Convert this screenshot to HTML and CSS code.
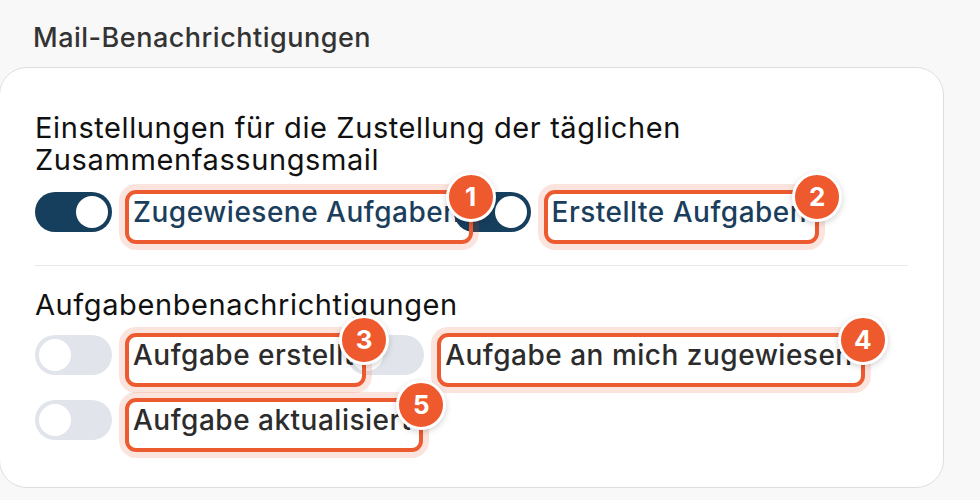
FILE: index.html
```html
<!DOCTYPE html>
<html lang="de">
<head>
    <meta charset="UTF-8">
    <meta name="viewport" content="width=device-width, initial-scale=1.0">
    <title>Mail-Benachrichtigungen</title>
    <link rel="stylesheet" href="styles.css">
</head>
<body>
    <h3 class="section-heading">Mail-Benachrichtigungen</h3>
    <div class="card">
        <p class="group-title">Einstellungen für die Zustellung der täglichen Zusammenfassungsmail</p>
        <div class="options">
            <div class="option">
                <span class="toggle on"></span>
                <span class="label on">Zugewiesene Aufgaben<span class="badge">1</span></span>
            </div>
            <div class="option">
                <span class="toggle on"></span>
                <span class="label on">Erstellte Aufgaben<span class="badge">2</span></span>
            </div>
        </div>

        <hr class="divider">

        <p class="group-title">Aufgabenbenachrichtigungen</p>
        <div class="options">
            <div class="option">
                <span class="toggle"></span>
                <span class="label">Aufgabe erstellt<span class="badge">3</span></span>
            </div>
            <div class="option">
                <span class="toggle"></span>
                <span class="label">Aufgabe an mich zugewiesen<span class="badge">4</span></span>
            </div>
            <div class="option">
                <span class="toggle"></span>
                <span class="label">Aufgabe aktualisiert<span class="badge">5</span></span>
            </div>
        </div>
    </div>
</body>
</html>
```

FILE: styles.css
```css
body {
    font-family: Inter, "Noto Sans", sans-serif;
    margin: 0;
    background-color: #f8f8f8;
    overflow: hidden;
}
.section-heading {
    margin: 22px 0 13px 33px;
    font-size: 27px;
    line-height: 32px;
    letter-spacing: 0.5px;
    font-weight: 500;
    color: #333;
}
.card {
    width: 873px;
    margin-left: -1px;
    padding: 44px 35px 47px 35px;
    background-color: white;
    border: 1px solid #dedede;
    border-radius: 28px;
}
.group-title {
    margin: 0;
    font-size: 29px;
    line-height: 32px;
    letter-spacing: 0.6px;
    color: #111;
}
.options {
    display: flex;
    flex-wrap: wrap;
    row-gap: 25px;
    margin-top: 16px;
}
.option {
    display: flex;
    align-items: center;
    gap: 21px;
    margin-right: -7px;
}
.toggle {
    position: relative;
    flex: none;
    width: 77px;
    height: 40px;
    border-radius: 20px;
    background-color: #e1e5eb;
}
.toggle::after {
    content: "";
    position: absolute;
    top: 4px;
    left: 4px;
    width: 32px;
    height: 32px;
    border-radius: 50%;
    background-color: white;
}
.toggle.on {
    background-color: #163f5e;
}
.toggle.on::after {
    left: 41px;
}
.label {
    position: relative;
    z-index: 1;
    font-size: 28px;
    line-height: 32px;
    letter-spacing: 0.5px;
    font-weight: 500;
    color: #2c2c2c;
}
.label.on {
    color: #1a3e5c;
}
/* callout frame around each label */
.label::before {
    content: "";
    position: absolute;
    top: -6px;
    bottom: -16px;
    left: -8px;
    right: -12px;
    border: 4px solid #ec5a30;
    border-radius: 11px;
    box-shadow: 0 0 0 6px rgba(236, 90, 48, 0.16);
}
.badge {
    position: absolute;
    top: -24px;
    right: -35px;
    z-index: 2;
    width: 44px;
    height: 44px;
    display: flex;
    align-items: center;
    justify-content: center;
    border: 3px solid white;
    border-radius: 50%;
    background-color: #ee5a2d;
    color: white;
    font-size: 26px;
    font-weight: 700;
    letter-spacing: 0;
    box-shadow: 0 2px 6px rgba(0, 0, 0, 0.18);
}
.divider {
    margin: 33px 0 23px;
    border: 0;
    border-top: 1px solid #e9e9e9;
}
.divider + .group-title + .options {
    margin-top: 14px;
}
```
